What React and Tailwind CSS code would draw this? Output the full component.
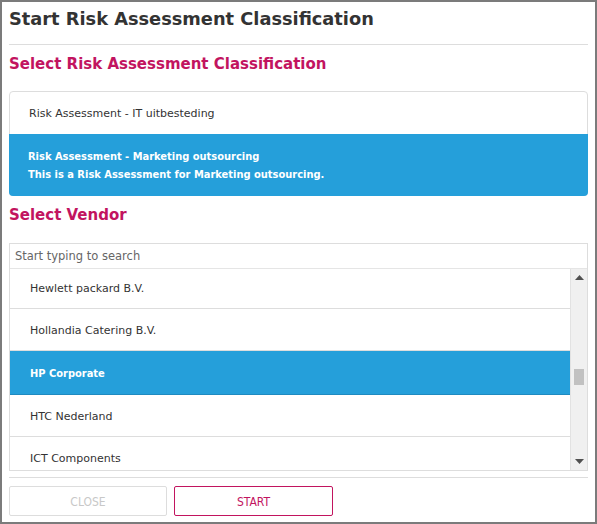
import { useState } from 'react';

const classifications = [
  { id: 1, name: 'Risk Assessment - IT uitbesteding' },
  {
    id: 2,
    name: 'Risk Assessment - Marketing outsourcing',
    description: 'This is a Risk Assessment for Marketing outsourcing.',
  },
];

const vendors = [
  'Hewlett packard B.V.',
  'Hollandia Catering B.V.',
  'HP Corporate',
  'HTC Nederland',
  'ICT Components',
];

const sans = { fontFamily: '"DejaVu Sans", sans-serif' };
const condensed = { fontFamily: '"DejaVu Sans Condensed", "DejaVu Sans", sans-serif' };

function ScrollBar() {
  return (
    <div className="w-[17px] shrink-0 bg-[#f0f0f0] border-l border-[#e2e2e2] flex flex-col items-center">
      <div className="h-[17px] flex items-center justify-center">
        <svg width="9" height="5" viewBox="0 0 9 5">
          <path d="M4.5 0 L9 5 L0 5 Z" fill="#505050" />
        </svg>
      </div>
      <div className="flex-1 w-full px-[3px] pt-[83px]">
        <div className="h-[16px] bg-[#c1c1c1]" />
      </div>
      <div className="h-[17px] flex items-center justify-center">
        <svg width="9" height="5" viewBox="0 0 9 5">
          <path d="M0 0 L9 0 L4.5 5 Z" fill="#505050" />
        </svg>
      </div>
    </div>
  );
}

export default function App() {
  const [selectedClass, setSelectedClass] = useState(2);
  const [selectedVendor, setSelectedVendor] = useState('HP Corporate');
  const [search, setSearch] = useState('');

  return (
    <div className="w-[597px] h-[524px] bg-white border-2 border-[#7b7b7b] px-[7px] flex flex-col" style={sans}>
      <h1 className="text-[17.8px] font-bold text-[#333] leading-[32px] pt-[1px]">
        Start Risk Assessment Classification
      </h1>
      <div className="border-t border-[#dddddd] mt-[9px]" />

      <h2 className="text-[15px] font-bold text-[#c2145f] leading-[20px] mt-[9px]">
        Select Risk Assessment Classification
      </h2>

      <div className="mt-[17px] border border-[#dddddd] rounded-[4px] flex flex-col">
        {classifications.map((c) => {
          const active = c.id === selectedClass;
          return (
            <button
              key={c.id}
              onClick={() => setSelectedClass(c.id)}
              style={active ? condensed : sans}
              className={
                active
                  ? 'text-left px-[19px] pt-[14px] pb-[12px] bg-[#259fda] text-white font-bold text-[11px] leading-[18px] rounded-b-[4px] -mx-px -mb-px'
                  : 'text-left px-[19px] pt-[2px] h-[42px] text-[#333] text-[11px] leading-[18px] flex items-center'
              }
            >
              <div>
                <div>{c.name}</div>
                {c.description && <div>{c.description}</div>}
              </div>
            </button>
          );
        })}
      </div>

      <h2 className="text-[15px] font-bold text-[#c2145f] leading-[20px] mt-[9px]">
        Select Vendor
      </h2>

      <div className="mt-[18px] border border-[#dddddd] flex flex-col">
        <input
          value={search}
          onChange={(e) => setSearch(e.target.value)}
          placeholder="Start typing to search"
          className="h-[25px] px-[5px] text-[11.5px] text-[#333] placeholder:text-[#666] outline-none border-b border-[#e5e5e5]"
        />
        <div className="h-[201px] flex overflow-hidden">
          <div className="flex-1 overflow-hidden">
            <div className="-mt-[2px]">
              {vendors.map((v) => {
                const active = v === selectedVendor;
                return (
                  <button
                    key={v}
                    onClick={() => setSelectedVendor(v)}
                    style={active ? condensed : sans}
                    className={
                      active
                        ? 'w-full h-[44px] text-left px-[20px] pt-[3px] text-[11px] font-bold text-white bg-[#259fda] border-b border-[#1f8ac0] flex items-center'
                        : 'w-full h-[42px] text-left px-[20px] pt-[3px] text-[11px] text-[#333] border-b border-[#dddddd] flex items-center'
                    }
                  >
                    {v}
                  </button>
                );
              })}
            </div>
          </div>
          <ScrollBar />
        </div>
      </div>

      <div className="border-t border-[#dddddd] mt-[6px]" />

      <div className="flex gap-[7px] mt-[8px]" style={condensed}>
        <button className="w-[158px] h-[30px] pt-[1px] border border-[#dddddd] rounded-[2px] text-[12px] text-[#c8c8c8] uppercase">
          Close
        </button>
        <button className="w-[159px] h-[30px] pt-[1px] border border-[#c2145f] rounded-[2px] text-[12px] text-[#c2145f] uppercase">
          Start
        </button>
      </div>
    </div>
  );
}
